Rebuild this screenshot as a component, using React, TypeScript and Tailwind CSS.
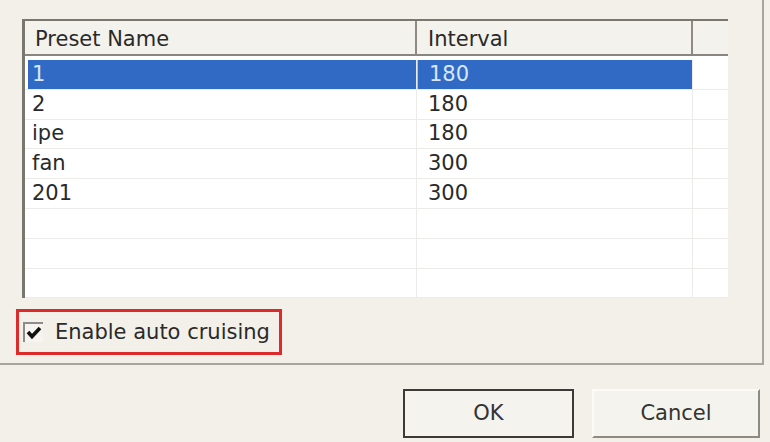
const rows = [
  { name: '1', interval: '180' },
  { name: '2', interval: '180' },
  { name: 'ipe', interval: '180' },
  { name: 'fan', interval: '300' },
  { name: '201', interval: '300' },
  { name: '', interval: '' },
  { name: '', interval: '' },
  { name: '', interval: '' },
]

export default function App() {
  return (
    <div
      className="w-[770px] h-[442px] bg-[#f3f0ea] text-[21px] text-[#2a2a2a] overflow-hidden flex flex-col"
      style={{ fontFamily: '"DejaVu Sans", Verdana, sans-serif' }}
    >
      {/* top panel */}
      <div className="w-[764px] h-[365px] shrink-0 border-r-2 border-b-2 border-[#a9a59d] pl-[22px] pt-[19px] flex flex-col">
        {/* list view */}
        <div className="w-[706px] h-[279px] bg-white border-l-[3px] border-t-2 border-[#7a7670] flex flex-col overflow-hidden">
          <div className="h-[35px] shrink-0 flex bg-[#f4f2ec] border-b-2 border-[#8a867f]">
            <div className="w-[392px] flex items-center pl-[10px] pt-[4px] border-r-2 border-[#8f8b84] leading-none">Preset Name</div>
            <div className="w-[276px] flex items-center pl-[11px] pt-[4px] border-r-2 border-[#8f8b84] leading-none">Interval</div>
            <div className="flex-1" />
          </div>
          <div className="pt-[4px] flex flex-col">
            {rows.map((r, i) => {
              const sel = i === 0
              return (
                <div key={i} className="h-[29.8px] shrink-0 flex border-b border-[#ecebe7] leading-none">
                  <div className="w-[392px] pl-[3px] border-r border-[#ecebe7] flex">
                    <div className={`flex-1 flex items-center pl-[4px] ${sel ? 'bg-[#316ac5] text-[#d9e6ff]' : ''}`}>{r.name}</div>
                  </div>
                  <div className="w-[276px] border-r border-[#ecebe7] flex">
                    <div className={`flex-1 flex items-center pl-[11px] ${sel ? 'bg-[#316ac5] text-[#d9e6ff] border-l border-[#a9c1ec]' : ''}`}>{r.interval}</div>
                  </div>
                  <div className="flex-1" />
                </div>
              )
            })}
          </div>
        </div>

        {/* checkbox, highlighted */}
        <div className="ml-[-6px] mt-[11px] w-[266px] h-[46px] border-[3px] border-[#dc2b2b] flex items-center pl-[4px] gap-[12px]">
          <div className="w-[20px] h-[20px] bg-[#f6f4ef] border-t-2 border-l-2 border-[#8c8c8c] flex items-center justify-center">
            <svg width="16" height="14" viewBox="0 0 16 14">
              <path d="M2 6 L6 10.5 L14 2" fill="none" stroke="#111" strokeWidth="3.6" />
            </svg>
          </div>
          <span className="leading-none">Enable auto cruising</span>
        </div>
      </div>

      {/* buttons */}
      <div className="flex justify-end gap-[18px] pt-[24px] pr-[10px]">
        <button className="w-[171px] h-[49px] bg-[#f5f3ee] border-2 border-[#3c3a36] flex items-center justify-center leading-none text-[#333]">
          OK
        </button>
        <button className="w-[168px] h-[49px] bg-[#f5f3ee] border-2 border-t-[#fbfaf7] border-l-[#fbfaf7] border-r-[#8e8a83] border-b-[#8e8a83] flex items-center justify-center leading-none text-[#333]">
          Cancel
        </button>
      </div>
    </div>
  )
}
